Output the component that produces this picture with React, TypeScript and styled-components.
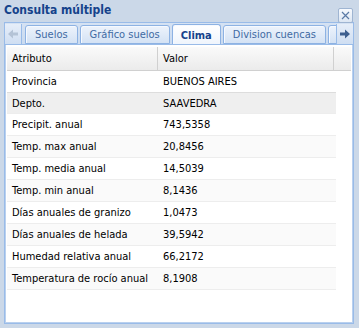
import React from "react";
import styled, { createGlobalStyle } from "styled-components";

const rows: [string, string][] = [
  ["Provincia", "BUENOS AIRES"],
  ["Depto.", "SAAVEDRA"],
  ["Precipit. anual", "743,5358"],
  ["Temp. max anual", "20,8456"],
  ["Temp. media anual", "14,5039"],
  ["Temp. min anual", "8,1436"],
  ["Días anuales de granizo", "1,0473"],
  ["Días anuales de helada", "39,5942"],
  ["Humedad relativa anual", "66,2172"],
  ["Temperatura de rocío anual", "8,1908"],
];

const tabs = ["Suelos", "Gráfico suelos", "Clima", "Division cuencas", "Suelos"];

const App: React.FC = () => {
  return (
    <>
      <GlobalStyle />
      <Window>
        <TitleBar>
          <Title>Consulta múltiple</Title>
          <CloseTool>
            <svg width="9" height="9" viewBox="0 0 9 9">
              <path d="M1 1 L8 8 M8 1 L1 8" stroke="#5a7aa5" strokeWidth="1.2" />
            </svg>
          </CloseTool>
        </TitleBar>

        <TabStrip>
          <Scroller $side="left">
            <svg width="12" height="10" viewBox="0 0 12 10">
              <path d="M1 5 L6 0.5 L6 3.5 L11 3.5 L11 6.5 L6 6.5 L6 9.5 Z" fill="#b4c3d6" />
            </svg>
          </Scroller>
          <TabList>
            {tabs.map((t, i) => (
              <Tab key={i} $active={t === "Clima"}>
                {t}
              </Tab>
            ))}
          </TabList>
          <Scroller $side="right">
            <svg width="12" height="10" viewBox="0 0 12 10">
              <path d="M11 5 L6 0.5 L6 3.5 L1 3.5 L1 6.5 L6 6.5 L6 9.5 Z" fill="#3d5f8f" />
            </svg>
          </Scroller>
        </TabStrip>

        <Body>
          <Grid>
            <HeaderRow>
              <HeadCell $w={151}>Atributo</HeadCell>
              <HeadCell $w={176}>Valor</HeadCell>
              <HeadCell $w={19} />
            </HeaderRow>
            {rows.map(([k, v], i) => (
              <Row key={k} $over={i === 1} $alt={i % 2 === 1}>
                <Cell $w={151}>{k}</Cell>
                <Cell $w={176}>{v}</Cell>
              </Row>
            ))}
          </Grid>
        </Body>
      </Window>
    </>
  );
};

export default App;

const GlobalStyle = createGlobalStyle`
  html, body {
    margin: 0;
    padding: 0;
    background: #cbd8e8;
  }
`;

const Window = styled.div`
  width: 359px;
  height: 328px;
  box-sizing: border-box;
  background: #cbd8e8;
  padding: 0 5px 4px 4px;
  display: flex;
  flex-direction: column;
  font-family: "DejaVu Sans Condensed", "Liberation Sans", sans-serif;
  font-size: 11px;
`;

const TitleBar = styled.div`
  height: 22px;
  display: flex;
  align-items: flex-start;
  justify-content: space-between;
  box-sizing: border-box;
`;

const Title = styled.div`
  font-weight: bold;
  color: #15428b;
  font-size: 12px;
  margin-top: 3px;
`;

const CloseTool = styled.div`
  width: 15px;
  height: 15px;
  box-sizing: border-box;
  border: 1px solid #9fb5d2;
  border-radius: 2px;
  background: linear-gradient(#f7fafe, #dce6f3);
  display: flex;
  align-items: center;
  justify-content: center;
  margin-top: 8px;
  margin-right: 1px;
  position: relative;
  z-index: 1;
`;

const TabStrip = styled.div`
  height: 23px;
  display: flex;
  align-items: flex-end;
  background: linear-gradient(#d5e2f3, #c9daf0);
  border: 1px solid #99bbe8;
  border-bottom: none;
  box-sizing: border-box;
`;

const Scroller = styled.div<{ $side: "left" | "right" }>`
  width: 17px;
  height: 21px;
  flex: none;
  display: flex;
  align-items: center;
  justify-content: center;
  background: linear-gradient(#e6eef9, #cfdef2);
  border-${(p) => (p.$side === "left" ? "right" : "left")}: 1px solid #99bbe8;
  border-bottom: 1px solid #99bbe8;
  box-sizing: border-box;
`;

const TabList = styled.div`
  flex: 1;
  display: flex;
  align-items: flex-end;
  overflow: hidden;
  gap: 2px;
  padding-left: 3px;
  height: 21px;
  border-bottom: 1px solid #99bbe8;
  box-sizing: border-box;
`;

const Tab = styled.div<{ $active: boolean }>`
  flex: none;
  height: ${(p) => (p.$active ? "21px" : "19px")};
  margin-bottom: ${(p) => (p.$active ? "-1px" : "0")};
  padding: 0 ${(p) => (p.$active ? "8px" : "9px")};
  display: flex;
  align-items: center;
  box-sizing: border-box;
  border: 1px solid #8db2e3;
  border-bottom: ${(p) => (p.$active ? "none" : "1px solid #8db2e3")};
  border-radius: 3px 3px 0 0;
  background: ${(p) =>
    p.$active ? "linear-gradient(#ffffff, #eef4fc)" : "linear-gradient(#edf3fc, #d4e2f4)"};
  box-shadow: inset 1px 1px 0 #f5f9ff;
  color: ${(p) => (p.$active ? "#15428b" : "#416aa3")};
  font-weight: ${(p) => (p.$active ? "bold" : "normal")};
  font-size: 11px;
  white-space: nowrap;
`;

const Body = styled.div`
  flex: 1;
  background: #fff;
  border: 1px solid #99bbe8;
  border-top: none;
  box-shadow: inset 1px 0 0 #b9d0ee, inset -1px 0 0 #b9d0ee, inset 0 -1px 0 #b9d0ee;
  padding: 2px 2px 0 2px;
  overflow: hidden;
`;

const Grid = styled.div`
  display: flex;
  flex-direction: column;
`;

const HeaderRow = styled.div`
  display: flex;
  height: 23px;
  background: linear-gradient(#fafafa, #ebebeb);
  border-bottom: 1px solid #d0d0d0;
`;

const HeadCell = styled.div<{ $w: number }>`
  width: ${(p) => p.$w}px;
  flex: none;
  box-sizing: border-box;
  padding-left: 5px;
  display: flex;
  align-items: center;
  border-right: 1px solid #d0d0d0;
  color: #000;
  &:last-child {
    border-right: none;
  }
`;

const Row = styled.div<{ $over: boolean; $alt: boolean }>`
  display: flex;
  width: 329px;
  height: 22px;
  box-sizing: border-box;
  border-bottom: 1px solid #ededed;
  background: ${(p) => (p.$over ? "#efefef" : p.$alt ? "#fafafa" : "#fff")};
  border-top: ${(p) => (p.$over ? "1px solid #dddddd" : "none")};
  margin-top: ${(p) => (p.$over ? "-1px" : "0")};
`;

const Cell = styled.div<{ $w: number }>`
  width: ${(p) => p.$w}px;
  flex: none;
  box-sizing: border-box;
  padding-left: 5px;
  display: flex;
  align-items: center;
  color: #000;
  white-space: nowrap;
`;
